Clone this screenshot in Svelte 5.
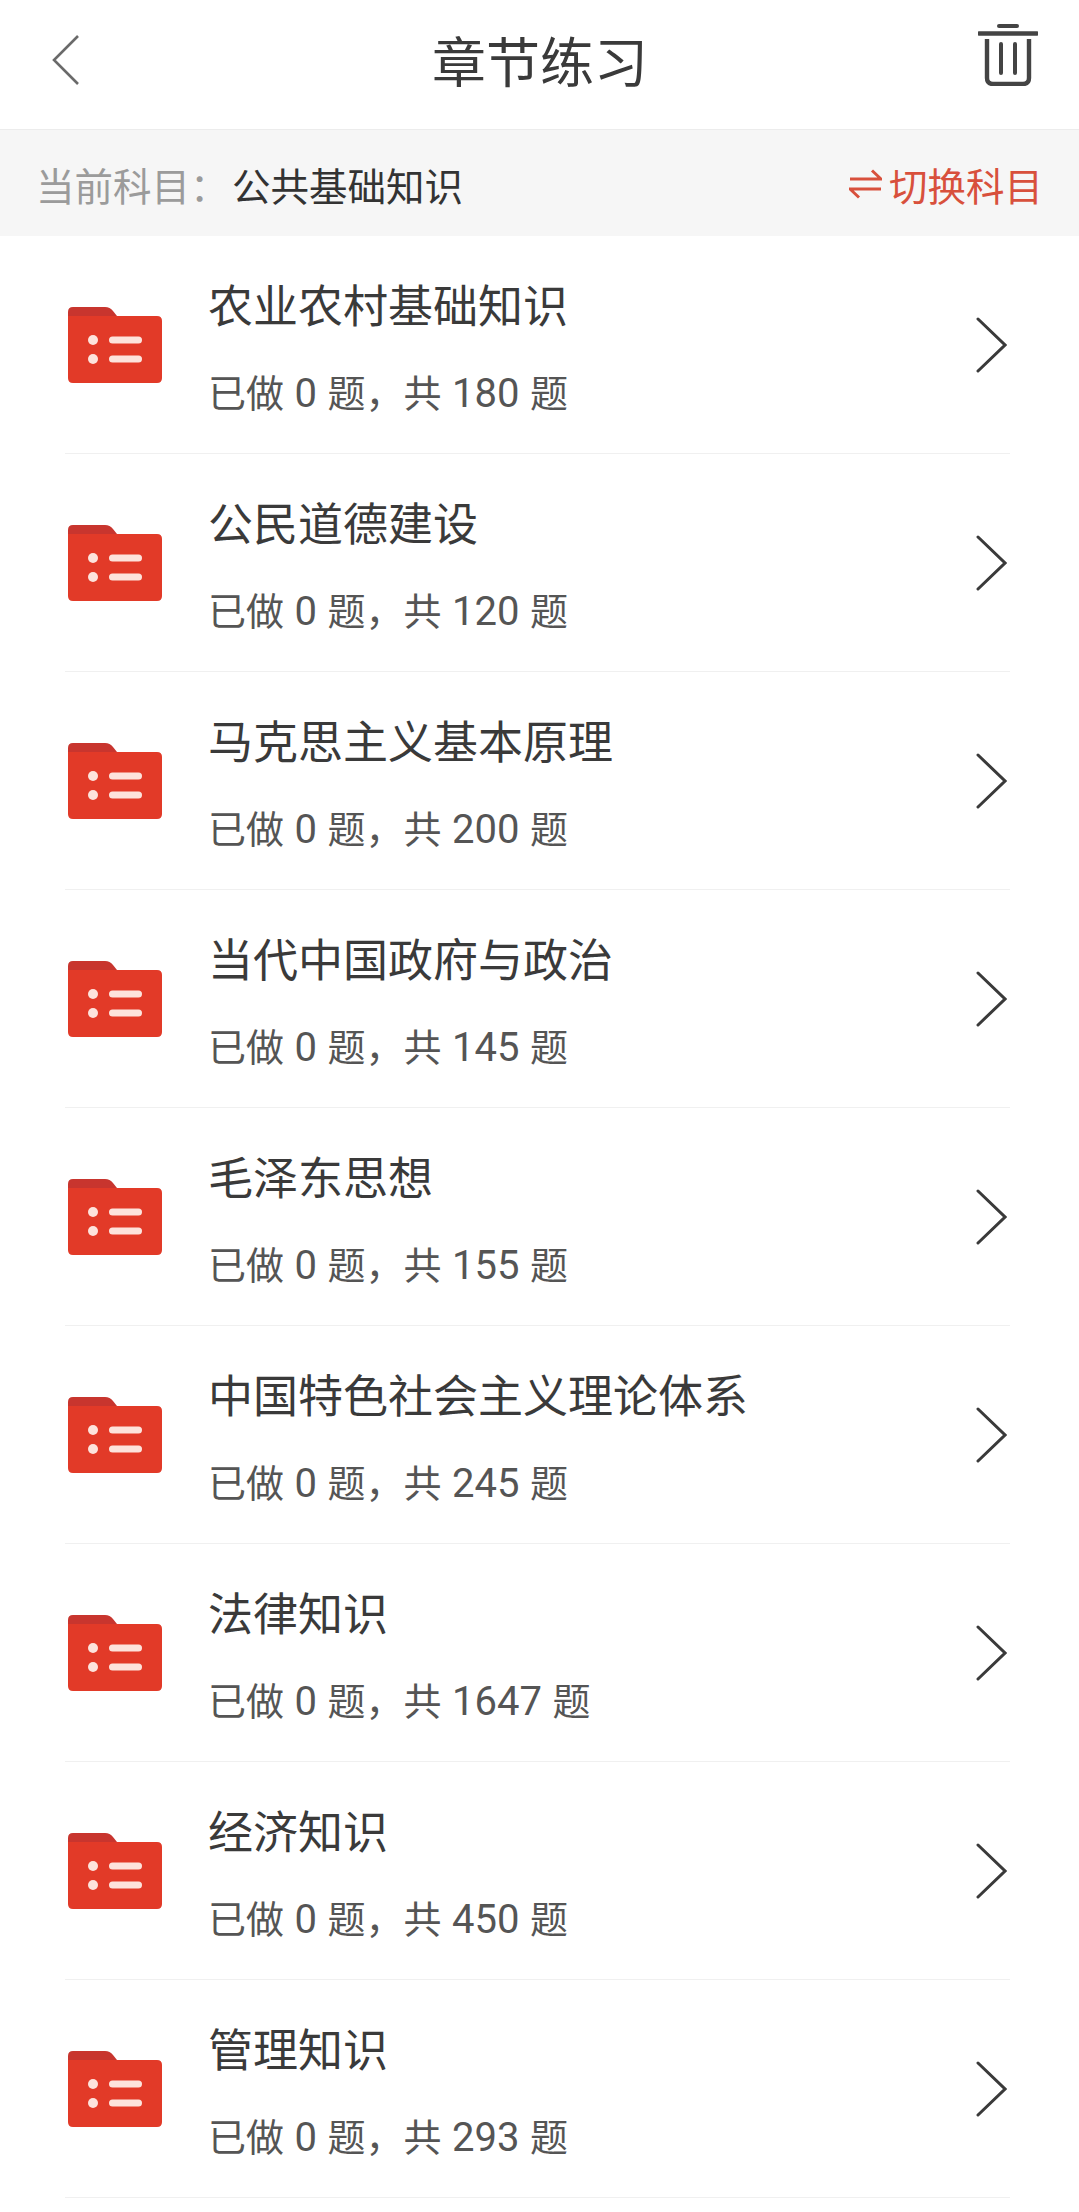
<script>
    const chapters = [
        { name: '农业农村基础知识', total: 180 },
        { name: '公民道德建设', total: 120 },
        { name: '马克思主义基本原理', total: 200 },
        { name: '当代中国政府与政治', total: 145 },
        { name: '毛泽东思想', total: 155 },
        { name: '中国特色社会主义理论体系', total: 245 },
        { name: '法律知识', total: 1647 },
        { name: '经济知识', total: 450 },
        { name: '管理知识', total: 293 }
    ];
</script>

<div class="page">
    <header class="topbar">
        <svg class="back" viewBox="0 0 27 50" width="27" height="50">
            <path d="M26 1 L2 25 L26 49" fill="none" stroke="#6a6a6a" stroke-width="2.6" />
        </svg>
        <h1>章节练习</h1>
        <svg class="trash" viewBox="0 0 60 62" width="60" height="62">
            <path d="M21 2 H39" stroke="#444" stroke-width="4" stroke-linecap="round" />
            <path d="M1 9.5 H59" stroke="#444" stroke-width="4.4" stroke-linecap="round" />
            <path d="M9 15 V54 Q9 60 15 60 H45 Q51 60 51 54 V15" fill="none" stroke="#444" stroke-width="4.4" />
            <path d="M23 20 V49 M37 20 V49" stroke="#444" stroke-width="4" stroke-linecap="round" />
        </svg>
    </header>

    <div class="subject">
        <span class="label">当前科目：</span>
        <span class="current">公共基础知识</span>
        <span class="switch">
            <svg viewBox="0 0 33 30" width="33" height="30">
                <path d="M1 10 H32 L23 1.5 M32 20 H1 L10 28.5" fill="none" stroke="#d8503c" stroke-width="3" />
            </svg>
            切换科目
        </span>
    </div>

    <ul class="list">
        {#each chapters as chapter}
            <li class="row">
                <svg class="folder" viewBox="0 0 94 76" width="94" height="76">
                    <path d="M0 5 Q0 0 5 0 H37 Q42 0 45 4 L49 9 H60 V20 H0 Z" fill="#c8352e" />
                    <path d="M0 9 H49 H89 Q94 9 94 14 V71 Q94 76 89 76 H5 Q0 76 0 71 Z" fill="#e23a28" />
                    <circle cx="25" cy="33" r="5" fill="#fde3dc" />
                    <circle cx="25" cy="52" r="5" fill="#fde3dc" />
                    <rect x="41" y="29.5" width="33" height="7" rx="3.5" fill="#fde3dc" />
                    <rect x="41" y="48.5" width="33" height="7" rx="3.5" fill="#fde3dc" />
                </svg>
                <div class="text">
                    <div class="name">{chapter.name}</div>
                    <div class="count">已做 <span class="num">0</span> 题，共 <span class="num">{chapter.total}</span> 题</div>
                </div>
                <svg class="chevron" viewBox="0 0 31 56" width="31" height="56">
                    <path d="M2 2 L29 28 L2 54" fill="none" stroke="#3a3a3a" stroke-width="3" stroke-linecap="round" />
                </svg>
            </li>
        {/each}
    </ul>
</div>

<style>
    :global(body) {
        margin: 0;
        background: #fff;
    }

    .page {
        width: 1079px;
        height: 2212px;
        overflow: hidden;
        font-family: "Noto Sans CJK SC", "Roboto", sans-serif;
        color: #333;
    }

    .topbar {
        height: 129px;
        display: flex;
        align-items: center;
        justify-content: space-between;
        padding: 0 41px 0 52px;
        position: relative;
        border-bottom: 1px solid #ececec;
    }

    .topbar h1 {
        position: absolute;
        left: 1px;
        right: 0;
        top: 21px;
        margin: 0;
        text-align: center;
        font-size: 54px;
        line-height: 77px;
        font-weight: 400;
        color: #3a3a3a;
    }

    .back {
        margin-bottom: 10px;
    }

    .trash {
        margin-bottom: 19px;
    }

    .subject {
        height: 106px;
        box-sizing: border-box;
        padding: 1px 36px 0 36px;
        background: #f6f6f6;
        display: flex;
        align-items: center;
        font-size: 38.5px;
    }

    .label {
        color: #9b9b9b;
        width: 196px;
    }

    .current {
        color: #333;
    }

    .switch {
        margin-left: auto;
        display: flex;
        align-items: center;
        gap: 7px;
        color: #d8503c;
    }

    .list {
        list-style: none;
        margin: 0;
        padding: 0;
    }

    .row {
        height: 217px;
        margin: 0 69px 0 65px;
        border-bottom: 1px solid #f0f0f0;
        display: flex;
        align-items: center;
    }

    .folder {
        margin-left: 3px;
        flex-shrink: 0;
    }

    .text {
        margin-left: 46px;
        padding-top: 3px;
        flex: 1;
    }

    .name {
        font-size: 45px;
        line-height: 64px;
        color: #3a3a3a;
    }

    .count {
        font-size: 38px;
        line-height: 54px;
        margin-top: 28px;
        word-spacing: 2px;
        color: #555;
    }

    .num {
        font-family: "Roboto", sans-serif;
        font-size: 40px;
    }

    .chevron {
        margin-right: 3px;
        margin-top: 1px;
        flex-shrink: 0;
    }
</style>
